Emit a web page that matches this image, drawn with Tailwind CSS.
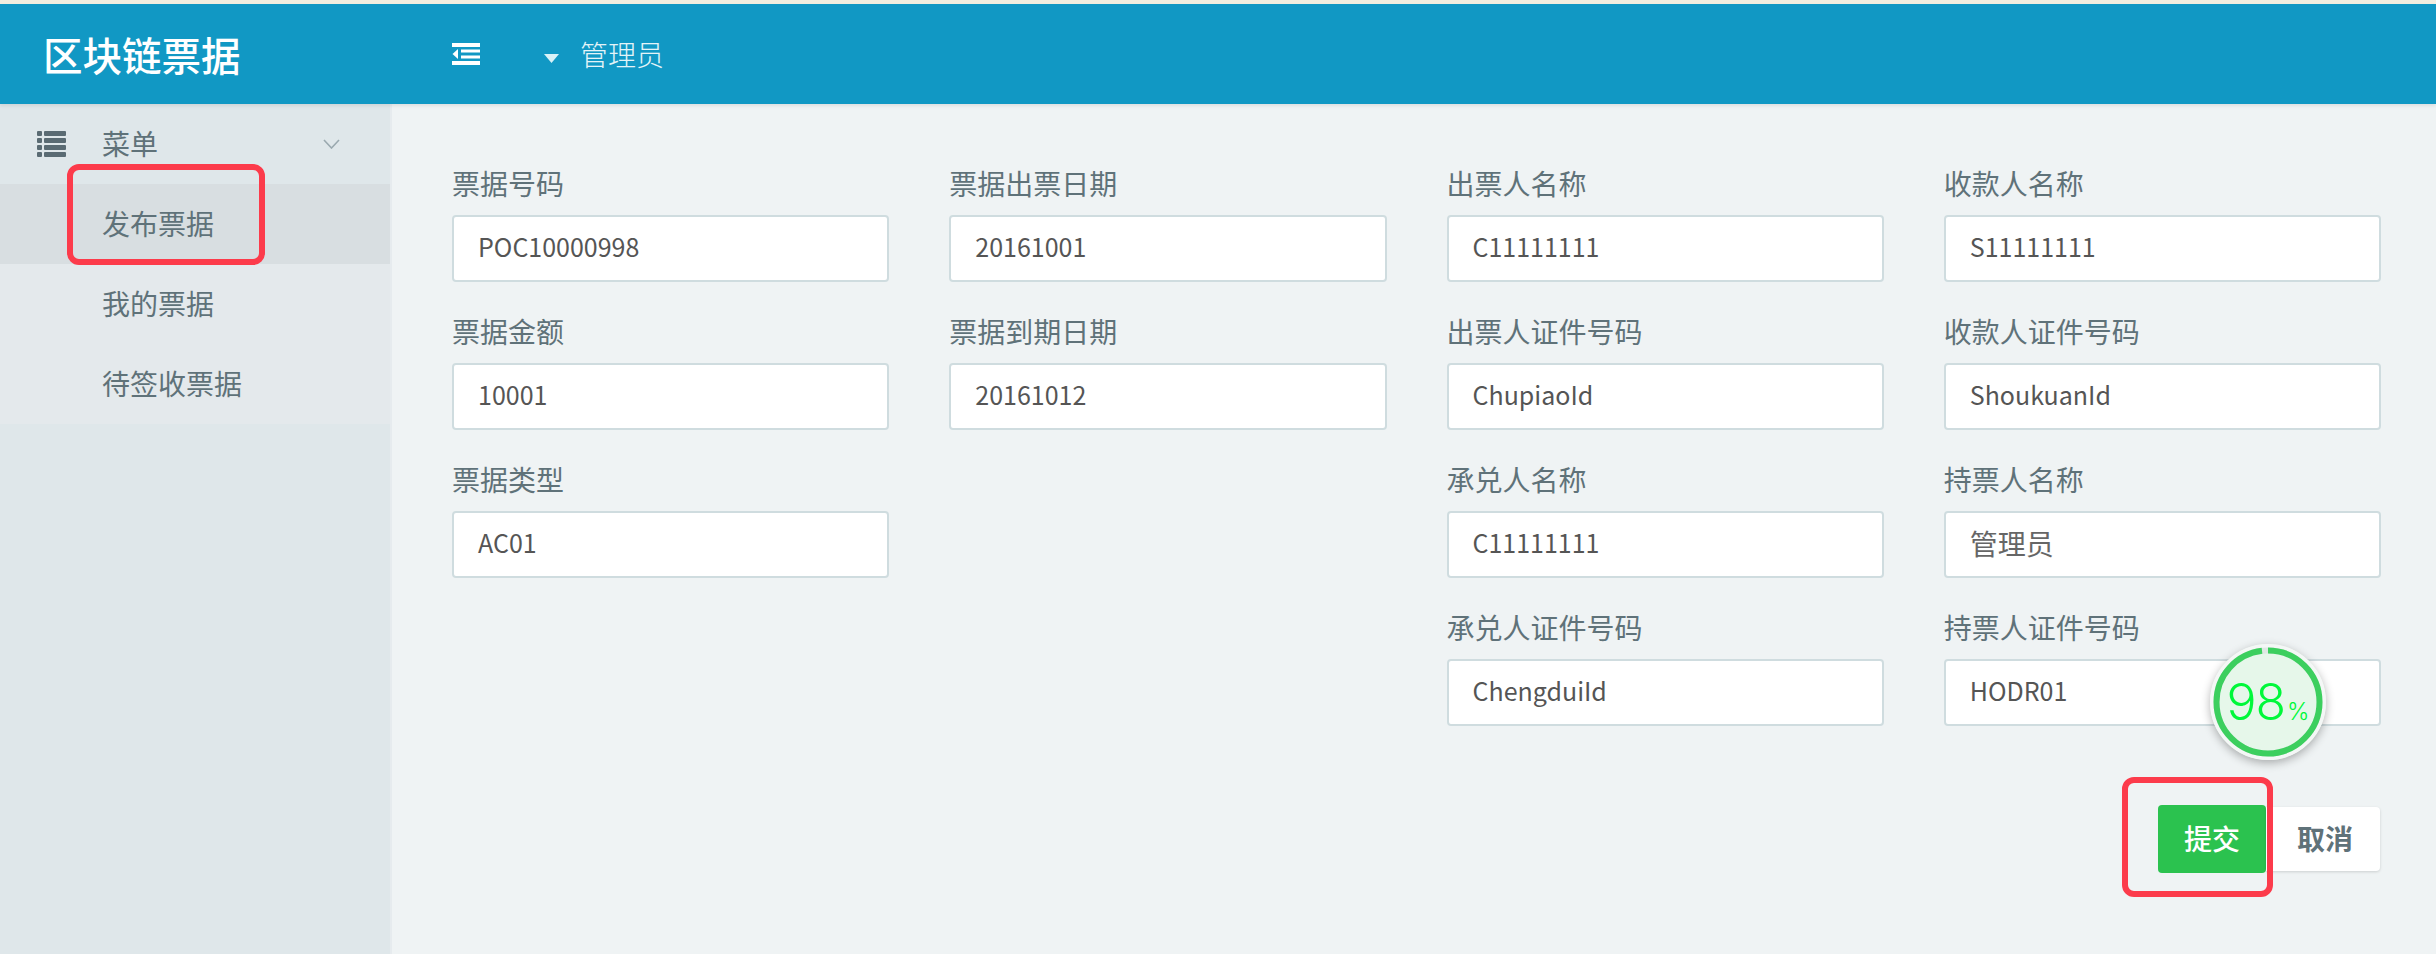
<!DOCTYPE html>
<html lang="zh-CN">
<head>
    <meta charset="UTF-8">
    <title>区块链票据</title>
    <script src="https://cdn.jsdelivr.net/npm/@tailwindcss/browser@4"></script>
</head>
<body class="relative h-[954px] w-[2436px] overflow-hidden bg-[#eff3f4] font-['Noto_Sans_CJK_SC','Noto_Sans',sans-serif] text-[28px] text-[#5f7279]">
    <div class="h-[4px] bg-[#f2eee0]"></div>

    <!-- Header -->
    <header class="relative z-10 flex h-[100px] items-center bg-[#1198c4] shadow-[0_2px_3px_rgba(0,0,0,0.08)]">
        <div class="w-[452px] pl-[43px] text-[39.5px] font-medium leading-[96px] text-white">区块链票据</div>
        <svg class="block h-[22px] w-[28px]" viewBox="0 0 28 22" fill="#fff">
            <rect x="0" y="0" width="28" height="4"/>
            <rect x="9" y="6.5" width="19" height="3"/>
            <rect x="9" y="12.5" width="19" height="3"/>
            <rect x="0" y="18" width="28" height="4"/>
            <polygon points="6,6 6,16 0.5,11"/>
        </svg>
        <svg class="ml-[64px] mt-[8px] block h-[9px] w-[15px]" viewBox="0 0 15 9" fill="#d8f2f8"><polygon points="0,0 15,0 7.5,9"/></svg>
        <div class="ml-[21px] font-light leading-none text-[#e4f4f8]">管理员</div>
    </header>

    <div class="flex h-[850px]">
        <!-- Sidebar -->
        <aside class="w-[392px] shrink-0 border-r-2 border-[#e6ebee] bg-[#dfe7ea]">
            <div class="flex h-[80px] items-center pl-[37px]">
                <svg class="block h-[26px] w-[29px]" viewBox="0 0 29 26" fill="#5a6b73">
                    <rect x="0" y="0" width="5" height="5" rx="1"/><rect x="7" y="0" width="22" height="5" rx="1"/>
                    <rect x="0" y="7" width="5" height="5" rx="1"/><rect x="7" y="7" width="22" height="5" rx="1"/>
                    <rect x="0" y="14" width="5" height="5" rx="1"/><rect x="7" y="14" width="22" height="5" rx="1"/>
                    <rect x="0" y="21" width="5" height="5" rx="1"/><rect x="7" y="21" width="22" height="5" rx="1"/>
                </svg>
                <span class="ml-[36px] mb-[2px] w-[221px]">菜单</span>
                <svg class="block h-[10px] w-[17px]" viewBox="0 0 17 10" fill="none" stroke="#9aa9af" stroke-width="1.6"><path d="M1 1l7.5 8 7.500-8"/></svg>
            </div>
            <ul class="bg-[#e4e9ec]">
                <li class="flex h-[80px] items-center bg-[#d8dee1] pb-[2px] pl-[102px]">发布票据</li>
                <li class="flex h-[80px] items-center pb-[2px] pl-[102px]">我的票据</li>
                <li class="flex h-[80px] items-center pb-[2px] pl-[102px]">待签收票据</li>
            </ul>
        </aside>

        <!-- Form -->
        <main class="flex-1 pl-[60px] pr-[55px] pt-[59px]">
            <div class="grid h-[562px] grid-cols-4 gap-x-[60px]">
                <div class="flex flex-col gap-y-[29px]">
                    <div><label class="block h-[52px] leading-[40px]">票据号码</label><div class="flex h-[67px] items-center rounded-[4px] border-2 border-[#cfdcdf] bg-white pb-[3px] pl-[24px] text-[25px] text-[#555]">POC10000998</div></div>
                    <div><label class="block h-[52px] leading-[40px]">票据金额</label><div class="flex h-[67px] items-center rounded-[4px] border-2 border-[#cfdcdf] bg-white pb-[3px] pl-[24px] text-[25px] text-[#555]">10001</div></div>
                    <div><label class="block h-[52px] leading-[40px]">票据类型</label><div class="flex h-[67px] items-center rounded-[4px] border-2 border-[#cfdcdf] bg-white pb-[3px] pl-[24px] text-[25px] text-[#555]">AC01</div></div>
                </div>
                <div class="flex flex-col gap-y-[29px]">
                    <div><label class="block h-[52px] leading-[40px]">票据出票日期</label><div class="flex h-[67px] items-center rounded-[4px] border-2 border-[#cfdcdf] bg-white pb-[3px] pl-[24px] text-[25px] text-[#555]">20161001</div></div>
                    <div><label class="block h-[52px] leading-[40px]">票据到期日期</label><div class="flex h-[67px] items-center rounded-[4px] border-2 border-[#cfdcdf] bg-white pb-[3px] pl-[24px] text-[25px] text-[#555]">20161012</div></div>
                </div>
                <div class="flex flex-col gap-y-[29px]">
                    <div><label class="block h-[52px] leading-[40px]">出票人名称</label><div class="flex h-[67px] items-center rounded-[4px] border-2 border-[#cfdcdf] bg-white pb-[3px] pl-[24px] text-[25px] text-[#555]">C11111111</div></div>
                    <div><label class="block h-[52px] leading-[40px]">出票人证件号码</label><div class="flex h-[67px] items-center rounded-[4px] border-2 border-[#cfdcdf] bg-white pb-[3px] pl-[24px] text-[25px] text-[#555]">ChupiaoId</div></div>
                    <div><label class="block h-[52px] leading-[40px]">承兑人名称</label><div class="flex h-[67px] items-center rounded-[4px] border-2 border-[#cfdcdf] bg-white pb-[3px] pl-[24px] text-[25px] text-[#555]">C11111111</div></div>
                    <div><label class="block h-[52px] leading-[40px]">承兑人证件号码</label><div class="flex h-[67px] items-center rounded-[4px] border-2 border-[#cfdcdf] bg-white pb-[3px] pl-[24px] text-[25px] text-[#555]">ChengduiId</div></div>
                </div>
                <div class="flex flex-col gap-y-[29px]">
                    <div><label class="block h-[52px] leading-[40px]">收款人名称</label><div class="flex h-[67px] items-center rounded-[4px] border-2 border-[#cfdcdf] bg-white pb-[3px] pl-[24px] text-[25px] text-[#555]">S11111111</div></div>
                    <div><label class="block h-[52px] leading-[40px]">收款人证件号码</label><div class="flex h-[67px] items-center rounded-[4px] border-2 border-[#cfdcdf] bg-white pb-[3px] pl-[24px] text-[25px] text-[#555]">ShoukuanId</div></div>
                    <div><label class="block h-[52px] leading-[40px]">持票人名称</label><div class="flex h-[67px] items-center rounded-[4px] border-2 border-[#cfdcdf] bg-white pb-[3px] pl-[24px] text-[28px] text-[#666]">管理员</div></div>
                    <div><label class="block h-[52px] leading-[40px]">持票人证件号码</label><div class="flex h-[67px] items-center rounded-[4px] border-2 border-[#cfdcdf] bg-white pb-[3px] pl-[24px] text-[25px] text-[#555]">HODR01</div></div>
                </div>
            </div>
            <!-- Buttons -->
            <div class="mr-[1px] mt-[80px] flex items-center justify-end">
                <button class="h-[68px] w-[108px] rounded-[4px] bg-[#2bc24f] pb-[2px] font-medium text-white">提交</button>
                <button class="h-[64px] w-[114px] rounded-r-[4px] bg-white pb-[2px] pl-[4px] font-bold text-[#5f7279] shadow-[0_1px_3px_rgba(0,0,0,0.15)]">取消</button>
            </div>
        </main>
    </div>

    <!-- Annotation boxes -->
    <div class="absolute left-[67px] top-[164px] h-[101px] w-[198px] rounded-[12px] border-[6px] border-[#fc3b4b]"></div>
    <div class="absolute left-[2122px] top-[777px] h-[120px] w-[151px] rounded-[12px] border-[6px] border-[#fc3b4b]"></div>

    <!-- Progress badge -->
    <div class="absolute left-[2210px] top-[644px] flex h-[116px] w-[116px] items-center justify-center rounded-full bg-[#e6f7ea] shadow-[0_3px_10px_rgba(0,0,0,0.3)]">
        <svg class="absolute inset-0 h-[116px] w-[116px] -rotate-90" viewBox="0 0 116 116" fill="none">
            <circle cx="58" cy="58" r="56" stroke="#f4f7f6" stroke-width="4"/>
            <circle cx="58" cy="58" r="51.500" stroke="#dfe8e4" stroke-width="6"/>
            <circle cx="58" cy="58" r="51.500" stroke="#3ccf5e" stroke-width="6" stroke-dasharray="317 324"/>
        </svg>
        <span class="relative flex items-baseline font-['Inter',sans-serif] font-light leading-none text-[#00f83a]">
            <span class="text-[50px] tracking-[-1px]">98</span><span class="ml-[2px] text-[24px] font-light">%</span>
        </span>
    </div>
</body>
</html>
